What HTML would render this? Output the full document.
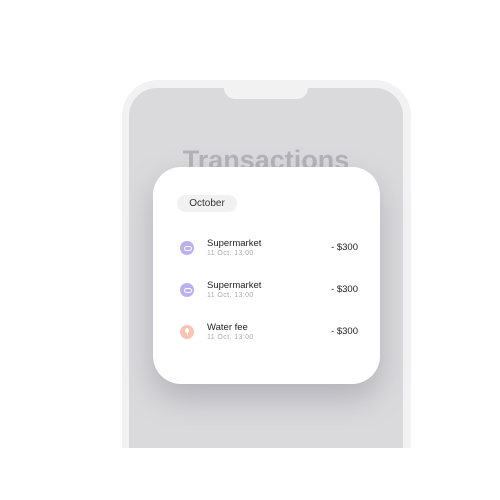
<!DOCTYPE html>
<html><head><style>
body{margin:0;width:500px;height:500px;background:#fff;position:relative;overflow:hidden;font-family:"Liberation Sans",sans-serif}
.outer{position:absolute;left:122px;top:80px;width:289px;height:368px;background:#f2f2f2;border-radius:36px 36px 0 0}
.inner{position:absolute;left:129px;top:88px;width:274px;height:360px;background:#dadadd;border-radius:28px 28px 0 0;overflow:hidden}
.notch{position:absolute;left:224px;top:88px;width:84px;height:11px;background:#f2f2f2;border-radius:0 0 12px 12px}
.title{position:absolute;left:129px;width:274px;top:145px;text-align:center;font-size:27px;font-weight:bold;color:#b3b2b8}
.card{position:absolute;left:153px;top:167px;width:227px;height:217px;background:#fff;border-radius:28px;box-shadow:0 14px 30px rgba(120,120,130,.4)}
.pill{position:absolute;left:24px;top:28px;width:60px;height:17px;border-radius:9px;background:#f1f1f2;font-size:10px;color:#333;text-align:center;line-height:17px}
.row{position:absolute;left:0;width:227px;height:30px}
.ic{position:absolute;left:27px;top:7px;width:14px;height:14px;border-radius:50%}
.n{position:absolute;left:54px;top:4px;font-size:9.5px;color:#222}
.d{position:absolute;left:54px;top:16px;font-size:7px;color:#aaa;letter-spacing:.4px}
.a{position:absolute;right:22px;top:8px;font-size:9.5px;color:#222}
</style></head><body>
<div class="outer"></div><div class="inner"></div><div class="notch"></div>
<div class="title">Transactions</div>
<div class="card">
<div class="pill">October</div>
<div class="row" style="top:67px"><div class="ic" style="background:#bdb0ef"><div style="position:absolute;left:4px;top:5px;width:6px;height:3px;border:1px solid #fff;border-radius:3px"></div></div><div class="n">Supermarket</div><div class="d">11 Oct. 13:00</div><div class="a">- $300</div></div>
<div class="row" style="top:109px"><div class="ic" style="background:#bdb0ef"><div style="position:absolute;left:4px;top:5px;width:6px;height:3px;border:1px solid #fff;border-radius:3px"></div></div><div class="n">Supermarket</div><div class="d">11 Oct. 13:00</div><div class="a">- $300</div></div>
<div class="row" style="top:151px"><div class="ic" style="background:#fbc3b3"><div style="position:absolute;left:5px;top:3px;width:4px;height:5px;background:#fff;border-radius:50%"></div><div style="position:absolute;left:6.5px;top:7px;width:1px;height:4px;background:#fff"></div></div><div class="n">Water fee</div><div class="d">11 Oct. 13:00</div><div class="a">- $300</div></div>
</div>
</body></html>
